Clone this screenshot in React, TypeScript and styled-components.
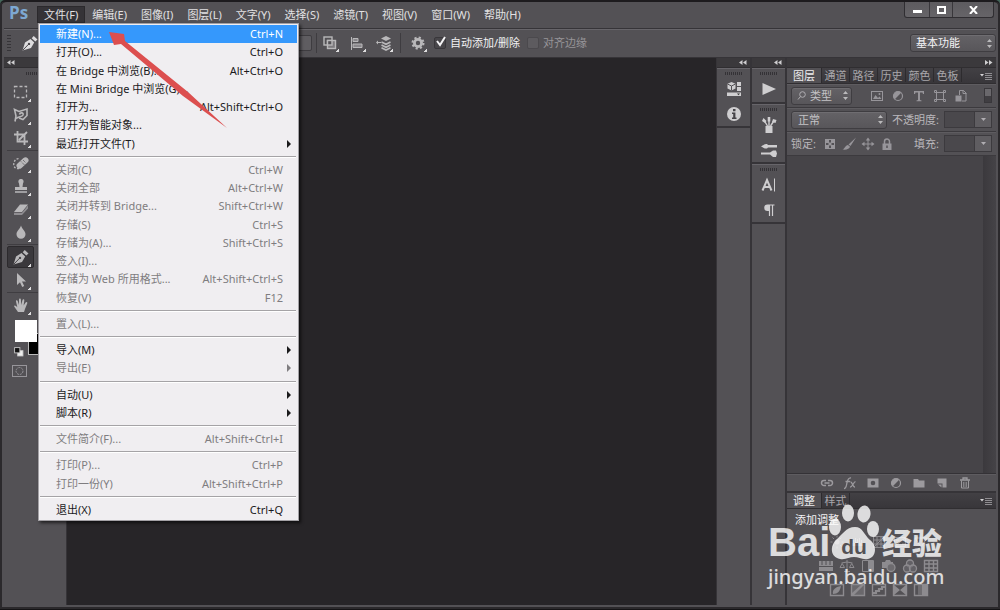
import React from "react";
import styled, { createGlobalStyle, css } from "styled-components";

const c = {
  panel: "#535155",
  edge: "#363438",
  light: "#67656a",
  canvas: "#272528",
  header: "#3b393c",
  icon: "#b9b8ba",
  dim: "#8d8b8f",
};

const Global = createGlobalStyle`
  * { box-sizing: border-box; }
  html, body, #root { height: 100%; }
  body {
    margin: 0;
    background: #44665a;
    font: 11px/14px "Noto Sans", "Noto Sans CJK SC", sans-serif;
    color: #dedddf;
    overflow: hidden;
  }
  button, input, select { font: inherit; color: inherit; margin: 0; padding: 0; border: 0; background: none; }
`;

const Win = styled.div`
  position: relative;
  display: flex;
  flex-direction: column;
  min-height: 100vh;
  padding: 0 4px 4px;
  background: ${c.panel};
  border-top: 2px solid #1d1b1e;
  border-bottom: 1px solid #151416;
  border-radius: 5px 5px 0 0;
  box-shadow: inset 2px 0 #2b292c, inset -2px 0 #2b292c, inset 0 -2px #2b292c;
`;

const TitleBar = styled.header`
  display: flex;
  align-items: flex-start;
  height: 26px;
`;

const Logo = styled.div`
  width: 33px;
  padding-left: 5px;
  font: bold 17px/22px "Open Sans", sans-serif;
  color: #7da8d2;
`;

const MenuBar = styled.nav`
  display: flex;
  flex: 1;
  padding-top: 4px;
`;

const MenuSlot = styled.div`
  position: relative;
`;

const MenuTitle = styled.button<{ $open?: boolean }>`
  display: block;
  height: 17px;
  padding: 0 6px;
  border: 1px solid transparent;
  white-space: nowrap;
  line-height: 15px;
  color: #e2e1e3;
  ${(p) => p.$open && css`background: #353337; border-color: #2b292c;`}
`;

const Controls = styled.div`
  display: flex;
  height: 16px;
  margin-right: 2px;
  border: 1px solid #302e32;
  border-top: 0;
  border-radius: 0 0 3px 3px;
  background: linear-gradient(#5d5b5f, #666468);
`;

const ControlButton = styled.button<{ $w: number }>`
  display: flex;
  align-items: center;
  justify-content: center;
  width: ${(p) => p.$w}px;
  & + & { border-left: 1px solid #39373b; }
`;

const FileMenu = styled.div`
  position: absolute;
  z-index: 5;
  top: 17px;
  left: 1px;
  display: flex;
  flex-direction: column;
  width: 261px;
  height: 498px;
  padding: 1px;
  border: 1px solid #a3a1a5;
  background: #f0eef1;
  color: #1b1a1c;
  box-shadow: 2px 2px 3px rgba(0, 0, 0, 0.6);
`;

const MenuGroup = styled.div<{ $n: number }>`
  display: grid;
  grid-auto-rows: 1fr;
  flex: ${(p) => p.$n} 1 0;
`;

const Separator = styled.hr`
  width: 256px;
  height: 2px;
  margin: 3px 0;
  border: 0;
  border-top: 1px solid #a5a3a6;
  border-bottom: 1px solid #fff;
`;

const MenuItem = styled.button<{ $active?: boolean }>`
  display: flex;
  align-items: center;
  justify-content: space-between;
  min-height: 0;
  padding: 0 14px 0 16px;
  text-align: left;
  white-space: nowrap;
  line-height: 16px;
  &:disabled { color: #7f7d80; }
  ${(p) => p.$active && css`background: #3598fc; color: #fff;`}
`;

const Chevron = styled.span`
  width: 0;
  margin-right: -8px;
  border: solid transparent;
  border-width: 4px 0 4px 4px;
  border-left-color: currentColor;
`;

const OptionsBar = styled.div`
  display: flex;
  align-items: center;
  height: 30px;
  padding-left: 3px;
  border-top: 1px solid ${c.edge};
  border-bottom: 1px solid ${c.edge};
  box-shadow: inset 0 1px ${c.light};
`;

const SideGrip = styled.span`
  width: 4px;
  height: 17px;
  margin-right: 11px;
  background: repeating-linear-gradient(${c.edge} 0 1px, transparent 1px 3px);
`;

const PathField = styled.button`
  width: 268px;
  height: 16px;
  margin: 0 4px 0 6px;
  border: 1px solid #3e3c40;
  border-radius: 2px;
  background: #5f5d61;
`;

const Divider = styled.span`
  width: 1px;
  height: 20px;
  background: #3e3c40;
`;

const ToolRow = styled.div<{ $inset?: boolean }>`
  display: flex;
  gap: 10px;
  padding: 0 8px 0 ${(p) => (p.$inset ? 8 : 4)}px;
`;

const IconButton = styled.button`
  position: relative;
  display: flex;
  align-items: center;
  justify-content: center;
  width: 17px;
  height: 17px;
  color: ${c.icon};
`;

const Flyout = styled.i`
  position: absolute;
  right: -1px;
  bottom: 0;
  width: 3px;
  height: 3px;
  background: linear-gradient(135deg, transparent 40%, #dddcde 40%);
`;

const Check = styled.label<{ $off?: boolean }>`
  display: flex;
  align-items: center;
  gap: 4px;
  margin-right: 7px;
  white-space: nowrap;
  color: ${(p) => (p.$off ? "#979599" : "#f2f1f3")};
`;

const CheckBox = styled.input`
  appearance: none;
  width: 12px;
  height: 12px;
  border: 1px solid #39373b;
  border-radius: 2px;
  background: #48464a;
  &:disabled { background: #5d5b5f; border-color: #4b494d; }
`;

const CheckMark = styled.span`
  position: relative;
  display: flex;
  svg { position: absolute; left: 1px; top: -1px; pointer-events: none; }
`;

const SelectBox = styled.span<{ $w: number; $bright?: boolean }>`
  position: relative;
  display: flex;
  align-items: center;
  flex: 0 0 auto;
  width: ${(p) => p.$w}px;
  height: 18px;
  border: 1px solid #3f3d41;
  border-radius: 3px;
  background: linear-gradient(#646266, #58565a);
  box-shadow: inset 0 1px #6f6d71;
  color: ${(p) => (p.$bright ? "#f4f3f5" : "#c4c3c6")};
  svg { position: absolute; pointer-events: none; }
  svg:last-child { right: 2px; }
  svg:first-child:not(:last-child) { left: 5px; }
`;

const Select = styled.select<{ $pad: number }>`
  appearance: none;
  width: 100%;
  height: 100%;
  padding-left: ${(p) => p.$pad}px;
  outline: 0;
`;

const Workspace = styled.div`
  display: flex;
  flex: 1;
  min-height: 0;
  background: ${c.edge};
`;

const ToolColumn = styled.aside`
  display: flex;
  flex-direction: column;
  width: 62px;
  background: ${c.panel};
`;

const StripHeader = styled.div<{ $start?: boolean }>`
  display: flex;
  align-items: center;
  justify-content: ${(p) => (p.$start ? "flex-start" : "flex-end")};
  flex: 0 0 10px;
  padding: 0 3px;
  background: ${c.header};
  color: #cfced0;
  border-bottom: 1px solid #302e31;
`;

const Grip = styled.span`
  width: 18px;
  height: 3px;
  margin: 4px auto 0;
  background: repeating-linear-gradient(90deg, #343236 0 1px, transparent 1px 2px);
`;

const ToolSet = styled.div`
  padding: 5px 3px 0;
`;

const ToolGroup = styled.div`
  display: flex;
  flex-direction: column;
  gap: 1px;
  padding: 1px 0;
  border-bottom: 1px solid #3f3d41;
  &:last-of-type { border-bottom: 0; }
`;

const Tool = styled.button<{ $on?: boolean }>`
  position: relative;
  display: flex;
  align-items: center;
  justify-content: center;
  width: 27px;
  height: 22px;
  border: 1px solid transparent;
  border-radius: 2px;
  color: ${c.icon};
  ${(p) => p.$on && css`background: #3a383c; border-color: #2c2a2d;`}
  ${Flyout} { right: 2px; }
`;

const Swatches = styled.div`
  position: relative;
  height: 40px;
  margin: 3px 0 0 11px;
`;

const Swatch = styled.button<{ $back?: boolean }>`
  position: absolute;
  width: 22px;
  height: 22px;
  left: ${(p) => (p.$back ? 13 : 0)}px;
  top: ${(p) => (p.$back ? 13 : 0)}px;
  background: ${(p) => (p.$back ? "#000" : "#fff")};
  border: 1px solid ${(p) => (p.$back ? "#bbb" : "#fff")};
`;

const SwapIcon = styled.span`
  position: absolute;
  left: -3px;
  top: 25px;
  display: flex;
`;

const MaskTool = styled(Tool)`
  margin-left: 2px;
`;

const Canvas = styled.main`
  flex: 1;
  margin: 0 1px;
  background: ${c.canvas};
`;

const Strip = styled.aside`
  display: flex;
  flex-direction: column;
  width: 33px;
  margin-right: 2px;
  background: ${c.panel};
`;

const StripGroup = styled.div<{ $h: number }>`
  display: flex;
  flex-direction: column;
  align-items: center;
  height: ${(p) => p.$h}px;
  border-bottom: 2px solid ${c.edge};
  box-shadow: inset 0 1px ${c.light};
`;

const StripButton = styled.button`
  display: flex;
  align-items: center;
  justify-content: center;
  width: 24px;
  height: 24px;
  margin-top: 1px;
  color: #cfced0;
  ${Grip} + & { margin-top: 2px; }
`;

const Dock = styled.aside`
  display: flex;
  flex-direction: column;
  width: 209px;
  background: ${c.panel};
`;

const Tabs = styled.div`
  display: flex;
  flex: 0 0 15px;
  background: linear-gradient(#424044, #38363a);
  border-bottom: 1px solid #302e31;
`;

const Tab = styled.button<{ $on?: boolean }>`
  width: 28px;
  height: 14px;
  border-right: 1px solid #2d2b2e;
  line-height: 13px;
  white-space: nowrap;
  color: #a9a7ab;
  ${(p) =>
    p.$on &&
    css`
      width: 35px;
      height: 15px;
      background: ${c.panel};
      color: #efeef0;
    `}
`;

const PanelMenu = styled.button`
  display: flex;
  align-items: center;
  margin-left: auto;
  padding-right: 4px;
  color: #bdbcbe;
`;

const PanelRow = styled.div`
  display: flex;
  align-items: center;
  flex: 0 0 24px;
  padding: 0 4px;
  border-bottom: 1px solid #3c3a3e;
  box-shadow: inset 0 1px #5e5c60;
  color: #b9b7bb;
`;

const FilterIcons = styled.div`
  display: flex;
  gap: 4px;
  margin-left: 16px;
  button { color: #97959a; }
`;

const LockIcons = styled.div`
  display: flex;
  gap: 2px;
  margin-left: 6px;
  button { color: #97959a; }
`;

const Toggle = styled.input`
  appearance: none;
  width: 8px;
  height: 15px;
  margin-left: auto;
  border: 1px solid #39373b;
  background: linear-gradient(#6a686c 0 50%, #403e42 50%);
`;

const Field = styled.label`
  display: flex;
  align-items: center;
  margin-left: auto;
  white-space: nowrap;
`;

const FieldInput = styled.input`
  width: 31px;
  height: 17px;
  margin-left: 5px;
  border: 1px solid #3c3a3e;
  background: #4a484c;
`;

const FieldDrop = styled.button`
  display: flex;
  align-items: center;
  justify-content: center;
  width: 17px;
  height: 17px;
  border: 1px solid #3c3a3e;
  border-left: 0;
  background: #5f5d61;
`;

const LayerList = styled.div`
  flex: 1;
  background: linear-gradient(90deg, #464448 calc(100% - 13px), #3b393d calc(100% - 13px), #454347);
  border-bottom: 1px solid #343236;
`;

const LayerActions = styled.div`
  display: flex;
  align-items: center;
  justify-content: center;
  gap: 6px;
  flex: 0 0 19px;
  padding-left: 8px;
  border-bottom: 2px solid ${c.edge};
  box-shadow: inset 0 1px #5e5c60;
  button { color: #9c9a9e; }
`;

const Adjustments = styled.section`
  flex: 0 0 auto;
  padding: 4px 8px 0;
  color: #f3f2f4;
`;

const AdjustTitle = styled.div`
  margin-bottom: 6px;
`;

const AdjustRow = styled.div`
  display: flex;
  justify-content: center;
  gap: 4px;
  height: 24px;
  padding-right: 26px;
  button { color: ${c.dim}; }
`;

const Arrow = styled.svg`
  position: absolute;
  z-index: 6;
  left: 105px;
  top: 26px;
  pointer-events: none;
`;

const Watermark = styled.div`
  position: absolute;
  z-index: 7;
  right: 52px;
  bottom: 20px;
  width: 180px;
  color: #fff;
  opacity: 0.8;
  pointer-events: none;
`;

const Brand = styled.div`
  display: flex;
  align-items: flex-end;
  height: 60px;
  padding-bottom: 5px;
  white-space: nowrap;
`;

const BrandLatin = styled.span`
  width: 60px;
  font: bold 40px/36px "Liberation Sans", sans-serif;
`;

const BrandHan = styled.span`
  margin: 0 0 4px 2px;
  font: 900 30px/30px "Noto Sans CJK SC", sans-serif;
`;

const Site = styled.div`
  font: 500 20px/24px "Noto Sans", sans-serif;
`;

const art: Record<string, React.ReactNode> = {
  pen: (
    <g fill="currentColor">
      <path d="M.5 15.500 3 7.500 8.500 4l3.700 3.600-3.200 5.400z" />
      <path d="m9.700 3.200 2-2.200 3.800 3.600-2.200 2z" />
      <path d="m1 15 5.500-5.700" stroke="#48464a" />
      <circle cx="7" cy="8.900" r="1.200" fill="#48464a" />
    </g>
  ),
  marquee: <rect x="1.5" y="2.5" width="12" height="11" fill="none" stroke="currentColor" strokeWidth="1.3" strokeDasharray="3 2" />,
  lasso: (
    <g fill="none" stroke="currentColor" strokeWidth="1.6">
      <path d="M2 14.500 3 9 1.500 2.500l4.500 2 8-2.500v6.500L10 12.500 6 11" />
      <path d="M6.500 7.500c.5-2.500 4.500-2 3.500.5-.8 1.800-4 1.500-7 3.500" />
    </g>
  ),
  crop: <path d="M4.500 1v10.500H15M1 4.500h10.500V15M6 10l8-8" fill="none" stroke="currentColor" strokeWidth="1.800" />,
  heal: (
    <g>
      <path d="M6 13.500C2 14.500 0 11 1 7.500 2 4 5 3 7 4" fill="none" stroke="currentColor" strokeDasharray="2 1.500" strokeWidth="1.300" />
      <rect x="2.500" y="5" width="14" height="6" rx="3" transform="rotate(-42 9.500 8)" fill="currentColor" />
      <path d="m8 6.500 3.500 3.500M10 5l3 3" stroke="#535155" strokeDasharray="1 1" />
    </g>
  ),
  stamp: <path d="M6.500 9 6 5.500C4.500 3 6 1 8 1s3.500 2 2 4.500L9.500 9H14v3H2V9zM2 13.300h12v1.500H2z" fill="currentColor" />,
  eraser: (
    <g>
      <path d="M7 3.500h8L9 11H1z" fill="currentColor" />
      <path d="M1 11.800h8L15 4.500v3L9 14H1z" fill="#8f8d91" />
    </g>
  ),
  drop: <path d="M8 1.500c1 3.500 4.500 5.500 4.500 8.700a4.500 4.500 0 0 1-9 0C3.500 7 7 5 8 1.500z" fill="currentColor" />,
  pointer: <path d="M4 1v12l3-2.800L9.200 15l2-1L9 9.500h4z" fill="currentColor" />,
  hand: (
    <path
      d="M5 15 1.500 10C.5 8.500 2 8 3 9l1.300 1.200L3 4.500c-.3-1.500 1.300-1.800 1.700-.4L6 8V2.500c0-1.500 1.800-1.500 1.900 0L8.200 8l1.300-5c.4-1.400 2-1 1.800.4L10.600 8.500l2-3c.8-1.200 2.200-.4 1.600.9L12 12l-1 3z"
      fill="currentColor"
    />
  ),
  mask: (
    <g fill="none" stroke="#97959a">
      <rect x=".5" y="2.500" width="14" height="11" />
      <circle cx="7.500" cy="8" r="3.500" strokeDasharray="2 1" />
    </g>
  ),
  swap: (
    <g>
      <rect x="6.500" y="6.500" width="6" height="6" fill="#eee" stroke="#ccc" />
      <rect x="3" y="3" width="6" height="6" fill="#111" stroke="#ccc" />
    </g>
  ),
  combine: (
    <g fill="none" stroke="currentColor" strokeWidth="1.400">
      <rect x="2" y="2" width="8" height="8" />
      <rect x="5.500" y="5.500" width="8" height="8" fill="#7d7b7f" />
      <rect x="5.500" y="5.500" width="4.500" height="4.500" fill="#535155" />
    </g>
  ),
  align: (
    <g>
      <path d="M2.500 2v13" stroke="currentColor" />
      <path d="M4 3.500h5v3H4zM4 9h9v3.500H4z" fill="#8a888c" stroke="currentColor" />
    </g>
  ),
  stack: (
    <g>
      <path d="M0 7.500 2 5.500v4z" fill="currentColor" />
      <path d="M1.500 7.500H5" stroke="currentColor" />
      <path d="m10 1 5 2.500L10 6 5 3.500z" fill="currentColor" />
      <path d="m5.500 7 4.500 2.300L14.500 7M5.500 10l4.500 2.300 4.500-2.300M5.500 12.800l4.500 2.200 4.500-2.200" fill="none" stroke="currentColor" strokeWidth="1.600" />
    </g>
  ),
  gear: (
    <g fill="none" stroke="currentColor">
      <circle cx="8" cy="8" r="3.600" strokeWidth="2.800" />
      <circle cx="8" cy="8" r="5.500" strokeWidth="2" strokeDasharray="2.160 2.160" />
    </g>
  ),
  bridge: (
    <g fill="currentColor">
      <path d="m5.500 1 4 1.800v4.700l-4 2-4-2V2.800z" />
      <path d="m1.500 3 4 2 4-2M5.500 5v4.500" stroke="#535155" fill="none" />
      <path d="M11 1h4v4h-4zM11 6h4v4h-4zM1 11.500h14v3.500H1z" />
      <path d="M11 12.500h3l-1.500 1.700z" fill="#333" />
    </g>
  ),
  info: (
    <g>
      <circle cx="8" cy="8" r="7" fill="currentColor" />
      <path d="M7 3h2.500v2.300H7zM6 6.500h3.400v5h1.100V13H6v-1.500h1.200V8H6z" fill="#454347" />
    </g>
  ),
  play: <path d="M1.500 2 15 8 1.500 14z" fill="currentColor" />,
  brushes: (
    <g fill="currentColor">
      <path d="M4.500 9h7v7h-7z" />
      <path d="M6.500 9 3.500 4M8 9V2M9.500 9l3-4.500" stroke="currentColor" strokeWidth="1.400" />
      <path d="m1 4 1.500-3 3 3-1.500 2zM6.700 0h2.600v4.500H6.700zM11 5l1-3 3.500 1-1 3z" />
    </g>
  ),
  presets: (
    <g fill="currentColor">
      <path d="M0 4.500c2-.5 3-3 6-2.500l1 1h9v2.500H7l-1 1C3 7 2 5 0 4.500z" />
      <path d="M0 10.500h9l3-2h3l1 3-1 3.500h-3l-3-2.500H0z" />
    </g>
  ),
  type: (
    <g fill="none" stroke="currentColor">
      <path d="M1.500 13.500 6 3l4.500 10.500M3.500 10h5" strokeWidth="2" />
      <path d="M13.500 1.500v13" />
    </g>
  ),
  para: (
    <g>
      <path d="M8 2.500H6.500a3 3 0 0 0 0 6.500H8z" fill="currentColor" />
      <path d="M8.500 14V3h5M11.500 14V3" fill="none" stroke="currentColor" strokeWidth="1.200" />
    </g>
  ),
  image: (
    <g>
      <rect x="2.500" y="3.500" width="11" height="9" fill="none" stroke="currentColor" />
      <path d="m4 11 2.500-4L9 10l1.500-1.500L12.500 11z" fill="currentColor" />
      <circle cx="10.500" cy="6" r="1" fill="currentColor" />
    </g>
  ),
  contrast: (
    <g>
      <circle cx="8" cy="8" r="4.500" fill="none" stroke="currentColor" strokeWidth="1.200" />
      <path d="M4.800 11.200A4.500 4.500 0 0 1 11.200 4.800z" fill="currentColor" />
    </g>
  ),
  serifT: <path d="M3 3h10v3h-1l-.5-1.500H9V12l1.500.4v.8h-5v-.8L7 12V4.500H4.500L4 6H3z" fill="currentColor" />,
  frame: (
    <g fill="none" stroke="currentColor">
      <rect x="4.500" y="4.500" width="7" height="7" />
      <path d="M2.500 2.500h2v2h-2zM11.500 2.500h2v2h-2zM2.500 11.500h2v2h-2zM11.500 11.500h2v2h-2z" />
    </g>
  ),
  smart: (
    <g>
      <path d="M6.500 7V2.500h4l2.500 2.500v8H9" fill="none" stroke="currentColor" />
      <path d="M2.500 7.500h6v6h-6z" fill="currentColor" />
      <path d="M10 2v3.500h3.500" stroke="currentColor" fill="none" />
    </g>
  ),
  checker: (
    <g>
      <rect x="3.500" y="3.500" width="9" height="9" fill="none" stroke="currentColor" />
      <path d="M4 4h3v3H4zM9 4h3v3H9zM6.500 6.500h3v3h-3zM4 9h3v3H4zM9 9h3v3H9z" fill="currentColor" />
    </g>
  ),
  brush: <path d="M15 1.500 9.500 10 7.500 8.500zM7 9l2 1.800c-.5 2.200-3.500 3.200-7.500 2.700 3-1.500 2.500-4 5.500-4.500z" fill="currentColor" />,
  move: (
    <g>
      <path d="M8 3v10M3 8h10" stroke="currentColor" />
      <path d="m8 1.500 2.200 3H5.800zM8 14.500l2.200-3H5.800zM1.500 8l3-2.200v4.400zM14.500 8l-3-2.200v4.400z" fill="currentColor" />
    </g>
  ),
  lock: (
    <g>
      <path d="M3.500 7.500h9V14h-9z" fill="currentColor" />
      <path d="M5.500 8V5.500a2.500 2.500 0 0 1 5 0V8" fill="none" stroke="currentColor" strokeWidth="1.500" />
      <path d="M8 9.500v2.500" stroke="#535155" strokeWidth="1.500" />
    </g>
  ),
  link: (
    <g fill="none" stroke="currentColor" strokeWidth="1.500">
      <path d="M7 5.500H5a2.500 2.500 0 0 0 0 5h2M9 5.500h2a2.500 2.500 0 0 1 0 5H9M5.500 8h5" />
    </g>
  ),
  fx: (
    <g fill="none" stroke="currentColor" strokeWidth="1.300">
      <path d="M2 13.500c2 0 2.200-2 2.800-5S6 2.500 9 3M3.500 6.500H8M8.500 7c2-.5 2 5.500 4.500 5M13.500 6.700c-2 0-3 5.500-5.500 5.500" />
    </g>
  ),
  maskAdd: <path fillRule="evenodd" d="M2.500 3.500h11v9h-11zM8 5.700a2.300 2.300 0 1 0 0 4.600 2.300 2.300 0 0 0 0-4.600z" fill="currentColor" />,
  folder: <path d="M2.500 4h4.500l1 1.500h5.500v7h-11z" fill="currentColor" />,
  page: <path d="M3.500 3.500h9v9h-4v-4h-5zM4 9.500h3.500V12.500z" fill="currentColor" />,
  trash: (
    <g fill="none" stroke="currentColor">
      <path d="M3 5h10M6 4.500V3h4v1.500" strokeWidth="1.300" />
      <path d="M4.500 5.500V13h7V5.500M6.800 7v5M9.200 7v5" />
    </g>
  ),
  sun: (
    <g>
      <circle cx="8" cy="8" r="2.500" fill="currentColor" />
      <path d="M8 1.500v2M8 12.500v2M1.500 8h2M12.500 8h2M3.500 3.500 5 5M11 11l1.500 1.500M3.500 12.500 5 11M11 5l1.500-1.500" stroke="currentColor" />
    </g>
  ),
  levels: <path d="M2 12V9h1V6h1v3h1V4h1v4h1V5h1v4h1V4h1v5h1V6h1v3h1v3z" fill="currentColor" />,
  curves: <path d="M2.500 2.500h11v11h-11zM6 3v10M10 3v10M3 6h10M3 10h10M3 13 13 3" fill="none" stroke="currentColor" />,
  exposure: <path d="M2.500 3.500h11v9h-11zM3 12 13 4M4 6h3M10 10h3" fill="none" stroke="currentColor" />,
  vibrance: <path d="M2 4h12L8 13z" fill="none" stroke="currentColor" />,
  hue: (
    <g>
      <path d="M1 3h14v10H1z" fill="currentColor" />
      <path d="M1 8.500h14M4 3v4M8 3v4M12 3v4" stroke="#535155" />
    </g>
  ),
  balance: <path d="M8 2v11M5 13.500h6M2.500 5 8 4l5.500 1M1 9.500h4.500L3.200 5.500zM10.500 9.500H15l-2.300-4z" fill="none" stroke="currentColor" />,
  bw: (
    <g>
      <path d="M2.500 2.500h11v11h-11z" fill="none" stroke="currentColor" />
      <path d="M8 3h5v10H8z" fill="currentColor" />
    </g>
  ),
  photo: (
    <g>
      <path d="M1 4h3l1-2h4l1 2h2v6H1z" fill="currentColor" />
      <circle cx="10" cy="9.500" r="4" fill="#6d6b6f" stroke="currentColor" strokeWidth="1.300" />
    </g>
  ),
  mixer: (
    <g fill="#6d6b6f" fillOpacity=".6" stroke="currentColor" strokeWidth="1.300">
      <circle cx="8" cy="5.500" r="3.500" />
      <circle cx="5" cy="10.500" r="3.500" />
      <circle cx="11" cy="10.500" r="3.500" />
    </g>
  ),
  table: <path d="M1.500 2.500h13v11h-13zM1 6h14M1 10h14M6 2.500v11M10.500 2.500v11" fill="none" stroke="currentColor" strokeWidth="1.400" />,
  invert: (
    <g>
      <path d="M1.500 2.500h13v11h-13z" fill="none" stroke="currentColor" strokeWidth="1.400" />
      <path d="M4 12c-1-4 2-7 8-8-1 5-3 8-8 8z" fill="currentColor" />
    </g>
  ),
  poster: (
    <g>
      <path d="M1.500 2.500h13v11h-13z" fill="#6a686c" stroke="currentColor" strokeWidth="1.400" />
      <path d="M2 11 11 3h3L4 13H2z" fill="currentColor" />
    </g>
  ),
  threshold: (
    <g fill="none" stroke="currentColor">
      <path d="M1.500 2.500h13v11h-13z" strokeWidth="1.400" />
      <path d="M2 11h3V9h3V7h3V5h3" strokeWidth="2.200" />
    </g>
  ),
  selective: (
    <g>
      <path d="M1.500 2.500h13v11h-13z" fill="none" stroke="currentColor" strokeWidth="1.400" />
      <path d="M2 3v10l6-5zM14 3v10L8 8z" fill="currentColor" />
    </g>
  ),
  gradient: (
    <g>
      <path d="M1.500 2.500h13v11h-13z" fill="none" stroke="currentColor" strokeWidth="1.400" />
      <path d="M9 3h5v10H9z" fill="currentColor" />
      <path d="M5 3h4v10H5z" fill="#6f6d71" />
    </g>
  ),
};

const Icon = ({ name, size = 16 }: { name: string; size?: number }) => (
  <svg width={size} height={size} viewBox="0 0 16 16" aria-hidden="true">
    {art[name]}
  </svg>
);

const Collapse = ({ right }: { right?: boolean }) => (
  <svg width="8" height="5" viewBox="0 0 8 5" aria-hidden="true">
    <path d={right ? "M0 0v5l3.500-2.500zM4 0v5l3.500-2.500z" : "M3.500 0v5L0 2.500zM7.500 0v5L4 2.500z"} fill="currentColor" />
  </svg>
);

const UpDown = () => (
  <svg width="7" height="9" viewBox="0 0 7 9" aria-hidden="true">
    <path d="M3.500 0 6 3H1zM3.500 9 6 6H1z" fill="#bab9bb" />
  </svg>
);

const Down = () => (
  <svg width="5" height="3" viewBox="0 0 5 3" aria-hidden="true">
    <path d="M0 0h5L2.500 3z" fill="#b0aeb2" />
  </svg>
);

const MenuGlyph = () => (
  <PanelMenu aria-label="panel menu">
    <svg width="12" height="8" viewBox="0 0 12 8">
      <path d="M0 2h4L2 4.500z" fill="#d5d4d6" />
      <path d="M5 1.500h7M5 3.500h7M5 5.500h7M5 7.500h7" stroke="#8f8d91" />
    </svg>
  </PanelMenu>
);

type Entry = { t: string; k?: string; off?: boolean; sub?: boolean; on?: boolean };
const fileMenu: Entry[][] = [
  [
    { t: "新建(N)...", k: "Ctrl+N", on: true },
    { t: "打开(O)...", k: "Ctrl+O" },
    { t: "在 Bridge 中浏览(B)...", k: "Alt+Ctrl+O" },
    { t: "在 Mini Bridge 中浏览(G)..." },
    { t: "打开为...", k: "Alt+Shift+Ctrl+O" },
    { t: "打开为智能对象..." },
    { t: "最近打开文件(T)", sub: true },
  ],
  [
    { t: "关闭(C)", k: "Ctrl+W", off: true },
    { t: "关闭全部", k: "Alt+Ctrl+W", off: true },
    { t: "关闭并转到 Bridge...", k: "Shift+Ctrl+W", off: true },
    { t: "存储(S)", k: "Ctrl+S", off: true },
    { t: "存储为(A)...", k: "Shift+Ctrl+S", off: true },
    { t: "签入(I)...", off: true },
    { t: "存储为 Web 所用格式...", k: "Alt+Shift+Ctrl+S", off: true },
    { t: "恢复(V)", k: "F12", off: true },
  ],
  [{ t: "置入(L)...", off: true }],
  [
    { t: "导入(M)", sub: true },
    { t: "导出(E)", sub: true, off: true },
  ],
  [
    { t: "自动(U)", sub: true },
    { t: "脚本(R)", sub: true },
  ],
  [{ t: "文件简介(F)...", k: "Alt+Shift+Ctrl+I", off: true }],
  [
    { t: "打印(P)...", k: "Ctrl+P", off: true },
    { t: "打印一份(Y)", k: "Alt+Shift+Ctrl+P", off: true },
  ],
  [{ t: "退出(X)", k: "Ctrl+Q" }],
];

const menus = ["编辑(E)", "图像(I)", "图层(L)", "文字(Y)", "选择(S)", "滤镜(T)", "视图(V)", "窗口(W)", "帮助(H)"];
const toolGroups = [["marquee", "lasso", "crop"], ["heal", "stamp", "eraser", "drop"], ["pen", "pointer"], ["hand"]];
const adjustRows = [
  ["sun", "levels", "curves", "exposure", "vibrance"],
  ["hue", "balance", "bw", "photo", "mixer", "table"],
  ["invert", "poster", "threshold", "selective", "gradient"],
];

const ToolIcon = ({ name }: { name: string }) => (
  <IconButton aria-label={name}>
    <Icon name={name} />
    <Flyout />
  </IconButton>
);

const PercentField = ({ label }: { label: string }) => (
  <Field>
    {label}
    <FieldInput disabled />
    <FieldDrop aria-label={label}>
      <Down />
    </FieldDrop>
  </Field>
);

export default function App() {
  return (
    <>
      <Global />
      <Win>
        <TitleBar>
          <Logo>Ps</Logo>
          <MenuBar>
            <MenuSlot>
              <MenuTitle $open>文件(F)</MenuTitle>
              <FileMenu>
                {fileMenu.map((group, i) => (
                  <React.Fragment key={i}>
                    {i > 0 && <Separator />}
                    <MenuGroup $n={group.length}>
                      {group.map((m) => (
                        <MenuItem key={m.t} $active={m.on} disabled={m.off}>
                          <span>{m.t}</span>
                          {m.k && <span>{m.k}</span>}
                          {m.sub && <Chevron />}
                        </MenuItem>
                      ))}
                    </MenuGroup>
                  </React.Fragment>
                ))}
              </FileMenu>
            </MenuSlot>
            {menus.map((m) => (
              <MenuTitle key={m}>{m}</MenuTitle>
            ))}
          </MenuBar>
          <Controls>
            <ControlButton $w={24} aria-label="minimize">
              <svg width="9" height="9">
                <path d="M0 5h9v3H0z" fill="#fff" />
              </svg>
            </ControlButton>
            <ControlButton $w={23} aria-label="maximize">
              <svg width="9" height="8">
                <path d="M1 1h7v6H1z" fill="none" stroke="#fff" strokeWidth="2" />
              </svg>
            </ControlButton>
            <ControlButton $w={41} aria-label="close">
              <svg width="9" height="8">
                <path d="m1 0 7 8M8 0 1 8" stroke="#fff" strokeWidth="2" />
              </svg>
            </ControlButton>
          </Controls>
        </TitleBar>

        <OptionsBar>
          <SideGrip />
          <Icon name="pen" />
          <PathField aria-label="path" />
          <Divider />
          <ToolRow>
            <ToolIcon name="combine" />
            <ToolIcon name="align" />
            <ToolIcon name="stack" />
          </ToolRow>
          <Divider />
          <ToolRow $inset>
            <ToolIcon name="gear" />
          </ToolRow>
          <Check>
            <CheckMark>
              <CheckBox type="checkbox" defaultChecked />
              <svg width="11" height="11">
                <path d="m2 5 3 4 5-8" fill="none" stroke="#f4f3f5" strokeWidth="2" />
              </svg>
            </CheckMark>
            自动添加/删除
          </Check>
          <Check $off>
            <CheckBox type="checkbox" disabled />
            对齐边缘
          </Check>
          <Field>
            <SelectBox $w={86} $bright>
              <Select $pad={5} aria-label="workspace">
                <option>基本功能</option>
              </Select>
              <UpDown />
            </SelectBox>
          </Field>
        </OptionsBar>

        <Workspace>
          <ToolColumn>
            <StripHeader $start>
              <Collapse />
            </StripHeader>
            <Grip />
            <ToolSet>
              {toolGroups.map((group, i) => (
                <ToolGroup key={i}>
                  {group.map((t) => (
                    <Tool key={t} $on={t === "pen"} aria-label={t}>
                      <Icon name={t} />
                      <Flyout />
                    </Tool>
                  ))}
                </ToolGroup>
              ))}
            </ToolSet>
            <Swatches>
              <Swatch $back aria-label="background" />
              <Swatch aria-label="foreground" />
              <SwapIcon>
                <Icon name="swap" size={14} />
              </SwapIcon>
            </Swatches>
            <MaskTool aria-label="mask">
              <Icon name="mask" />
            </MaskTool>
          </ToolColumn>

          <Canvas />

          <Strip>
            <StripHeader>
              <Collapse />
            </StripHeader>
            <StripGroup $h={60}>
              <Grip />
              <StripButton aria-label="bridge"><Icon name="bridge" /></StripButton>
              <StripButton aria-label="info"><Icon name="info" /></StripButton>
            </StripGroup>
          </Strip>
          <Strip>
            <StripHeader>
              <Collapse />
            </StripHeader>
            <StripGroup $h={36}>
              <Grip />
              <StripButton aria-label="play"><Icon name="play" /></StripButton>
            </StripGroup>
            <StripGroup $h={60}>
              <Grip />
              <StripButton aria-label="brushes"><Icon name="brushes" /></StripButton>
              <StripButton aria-label="presets"><Icon name="presets" /></StripButton>
            </StripGroup>
            <StripGroup $h={60}>
              <Grip />
              <StripButton aria-label="type"><Icon name="type" /></StripButton>
              <StripButton aria-label="paragraph"><Icon name="para" /></StripButton>
            </StripGroup>
          </Strip>

          <Dock>
            <StripHeader>
              <Collapse right />
            </StripHeader>
            <Tabs>
              <Tab $on>图层</Tab>
              {["通道", "路径", "历史", "颜色", "色板"].map((t) => (
                <Tab key={t}>{t}</Tab>
              ))}
              <MenuGlyph />
            </Tabs>
            <PanelRow>
              <SelectBox $w={61}>
                <svg width="9" height="9" viewBox="0 0 9 9">
                  <circle cx="5.500" cy="3.500" r="2.800" fill="none" stroke="#b0aeb2" />
                  <path d="M3.500 5.500 1 8.500" stroke="#b0aeb2" />
                </svg>
                <Select $pad={18} aria-label="filter">
                  <option>类型</option>
                </Select>
                <UpDown />
              </SelectBox>
              <FilterIcons>
                {["image", "contrast", "serifT", "frame", "smart"].map((n) => (
                  <IconButton key={n} aria-label={n}>
                    <Icon name={n} />
                  </IconButton>
                ))}
              </FilterIcons>
              <Toggle type="checkbox" aria-label="filter toggle" />
            </PanelRow>
            <PanelRow>
              <SelectBox $w={96}>
                <Select $pad={6} aria-label="blend mode">
                  <option>正常</option>
                </Select>
                <UpDown />
              </SelectBox>
              <PercentField label="不透明度:" />
            </PanelRow>
            <PanelRow>
              <span>锁定:</span>
              <LockIcons>
                {["checker", "brush", "move", "lock"].map((n) => (
                  <IconButton key={n} aria-label={n}>
                    <Icon name={n} />
                  </IconButton>
                ))}
              </LockIcons>
              <PercentField label="填充:" />
            </PanelRow>
            <LayerList />
            <LayerActions>
              {["link", "fx", "maskAdd", "contrast", "folder", "page", "trash"].map((n) => (
                <IconButton key={n} aria-label={n}>
                  <Icon name={n} />
                </IconButton>
              ))}
            </LayerActions>
            <Tabs>
              <Tab $on>调整</Tab>
              <Tab>样式</Tab>
              <MenuGlyph />
            </Tabs>
            <Adjustments>
              <AdjustTitle>添加调整</AdjustTitle>
              {adjustRows.map((row, i) => (
                <AdjustRow key={i}>
                  {row.map((n) => (
                    <IconButton key={n} aria-label={n}>
                      <Icon name={n} />
                    </IconButton>
                  ))}
                </AdjustRow>
              ))}
            </Adjustments>
          </Dock>
        </Workspace>

        <Arrow width="126" height="106" viewBox="0 0 126 106" aria-hidden="true">
          <path d="M4 4 19 6 20 13 83 64 122 100 78 68 16 16 9 17z" fill="#dc4f4f" />
        </Arrow>

        <Watermark>
          <Brand>
            <BrandLatin>Bai</BrandLatin>
            <svg width="52" height="56" viewBox="-2 0 52 56" aria-hidden="true">
              <g fill="#fff">
                <ellipse cx="5" cy="23" rx="6" ry="8.500" />
                <ellipse cx="18" cy="9" rx="6" ry="8.500" />
                <ellipse cx="34" cy="10" rx="6.500" ry="8.500" transform="rotate(8 34 10)" />
                <ellipse cx="43" cy="25" rx="6" ry="8" />
                <path d="M25 23c8 0 9 8 15 13 7 5 7 17-2 19-6 1-9-2-14-2s-8 3-14 2C0 53 0 42 6 36c6-5 10-13 19-13z" />
              </g>
              <text x="24" y="50" textAnchor="middle" fontFamily="Liberation Sans" fontWeight="bold" fontSize="21" fill="#535155">
                du
              </text>
            </svg>
            <BrandHan>经验</BrandHan>
          </Brand>
          <Site>jingyan.baidu.com</Site>
        </Watermark>
      </Win>
    </>
  );
}
